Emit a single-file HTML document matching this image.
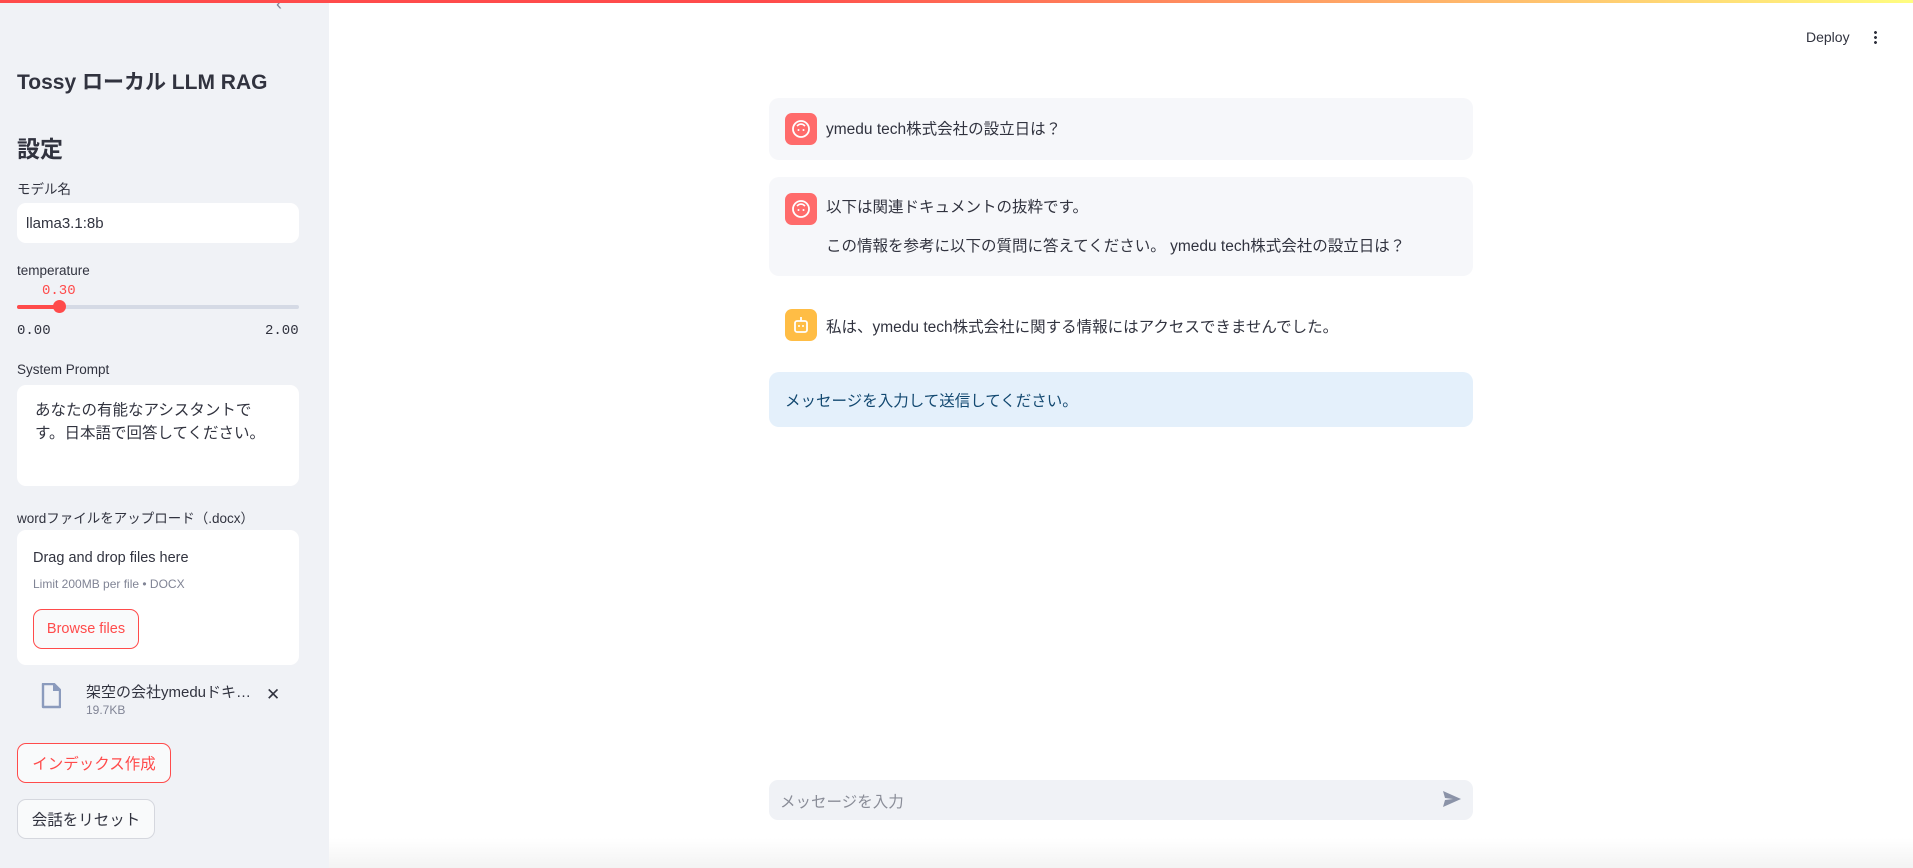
<!DOCTYPE html>
<html><head><meta charset="utf-8"><style>
*{box-sizing:border-box;margin:0;padding:0}
body{width:1913px;height:868px;overflow:hidden;background:#fff;font-family:"Liberation Sans","Noto Sans CJK JP",sans-serif;color:#31333f;position:relative}
.topbar{position:absolute;left:0;top:0;width:1913px;height:3px;background:linear-gradient(90deg,#ff4b4b,#ff4b4b 40%,#fffd80)}
.side{position:absolute;left:0;top:0;width:329px;height:868px;background:#f0f2f6}
.a{position:absolute}
.lbl{font-size:13.5px;color:#31333f}
.box{background:#fff;border-radius:9px}
.mono{font-family:"Liberation Mono",monospace;font-size:14px}
.btn{position:absolute;border-radius:9px;background:#f9fafb;font-size:16px;display:flex;align-items:center;justify-content:center}
.msg{position:absolute;left:769px;width:704px;border-radius:10px;background:#f6f7fa}
.av{position:absolute;left:16px;width:32px;height:32px;border-radius:7px;display:flex;align-items:center;justify-content:center}
.mt{position:absolute;left:57px;font-size:15.5px;white-space:nowrap}
</style></head><body>
<div class="side">
 <div class="a" style="left:276px;top:-6px;font-size:18px;color:#808495">‹</div>
 <div class="a" style="left:17px;top:66px;font-size:21px;font-weight:bold">Tossy ローカル LLM RAG</div>
 <div class="a" style="left:17px;top:130px;font-size:23px;font-weight:bold">設定</div>
 <div class="a lbl" style="left:17px;top:178px">モデル名</div>
 <div class="a box" style="left:17px;top:203px;width:282px;height:40px;padding:12px 9px;font-size:15px">llama3.1:8b</div>
 <div class="a lbl" style="left:17px;top:263px">temperature</div>
 <div class="a mono" style="left:42px;top:283px;color:#ff4b4b">0.30</div>
 <div class="a" style="left:17px;top:305px;width:282px;height:4px;background:#d5dae5;border-radius:2px"></div>
 <div class="a" style="left:17px;top:305px;width:43px;height:4px;background:#ff4b4b;border-radius:2px"></div>
 <div class="a" style="left:53px;top:300px;width:13px;height:13px;background:#ff4b4b;border-radius:50%"></div>
 <div class="a mono" style="left:17px;top:323px">0.00</div>
 <div class="a mono" style="left:265px;top:323px">2.00</div>
 <div class="a lbl" style="left:17px;top:362px">System Prompt</div>
 <div class="a box" style="left:17px;top:385px;width:282px;height:101px;padding:14px 20px 0 18px;font-size:15.5px;line-height:23px">あなたの有能なアシスタントで<br>す。日本語で回答してください。</div>
 <div class="a lbl" style="left:17px;top:507px">wordファイルをアップロード（.docx）</div>
 <div class="a box" style="left:17px;top:530px;width:282px;height:135px"></div>
 <div class="a" style="left:33px;top:550px;font-size:14.5px">Drag and drop files here</div>
 <div class="a" style="left:33px;top:577px;font-size:12px;color:#808495">Limit 200MB per file • DOCX</div>
 <div class="btn" style="left:33px;top:609px;width:106px;height:40px;border:1px solid #ff4b4b;color:#ff4b4b;font-size:14.5px">Browse files</div>
 <svg class="a" style="left:41px;top:683px" width="20" height="26" viewBox="0 0 20 26"><path d="M2 1h11l6 6v17H2z" fill="none" stroke="#8b9bbd" stroke-width="2.4" stroke-linejoin="round"/><path d="M12 1v7h7" fill="#8b9bbd"/></svg>
 <div class="a" style="left:86px;top:681px;font-size:15px">架空の会社ymeduドキ…</div>
 <div class="a" style="left:86px;top:703px;font-size:12px;color:#808495">19.7KB</div>
 <div class="a" style="left:266px;top:685px;font-size:17px">✕</div>
 <div class="btn" style="left:17px;top:743px;width:154px;height:40px;border:1px solid #ff4b4b;color:#ff4b4b;font-size:15.5px">インデックス作成</div>
 <div class="btn" style="left:17px;top:799px;width:138px;height:40px;border:1px solid #d5d7de;font-size:15.5px">会話をリセット</div>
</div>
<div class="topbar"></div>
<div class="a" style="left:1806px;top:29px;font-size:14px">Deploy</div>
<div class="a" style="left:1874px;top:30px;width:3px;height:14px;background:radial-gradient(circle,#31333f 1.3px,transparent 1.6px) 0 0/3px 5px"></div>

<div class="msg" style="top:98px;height:62px">
 <div class="av" style="top:15px;background:#ff6b6b"><svg width="20" height="20" viewBox="0 0 20 20"><circle cx="10" cy="10" r="8" fill="none" stroke="#fff" stroke-width="1.8"/><path d="M6 7q4-4 8 0" fill="none" stroke="#fff" stroke-width="1.6"/><circle cx="7.5" cy="11" r="1" fill="#fff"/><circle cx="12.5" cy="11" r="1" fill="#fff"/></svg></div>
 <div class="mt" style="top:19px">ymedu tech株式会社の設立日は？</div>
</div>
<div class="msg" style="top:177px;height:99px">
 <div class="av" style="top:16px;background:#ff6b6b"><svg width="20" height="20" viewBox="0 0 20 20"><circle cx="10" cy="10" r="8" fill="none" stroke="#fff" stroke-width="1.8"/><path d="M6 7q4-4 8 0" fill="none" stroke="#fff" stroke-width="1.6"/><circle cx="7.5" cy="11" r="1" fill="#fff"/><circle cx="12.5" cy="11" r="1" fill="#fff"/></svg></div>
 <div class="mt" style="top:18px">以下は関連ドキュメントの抜粋です。</div>
 <div class="mt" style="top:57px">この情報を参考に以下の質問に答えてください。 ymedu tech株式会社の設立日は？</div>
</div>
<div class="msg" style="top:299px;height:52px;background:#fff">
 <div class="av" style="top:10px;background:#ffbd45"><svg width="20" height="20" viewBox="0 0 20 20"><rect x="4" y="6" width="12" height="11" rx="2" fill="none" stroke="#fff" stroke-width="1.8"/><path d="M10 2v4" stroke="#fff" stroke-width="1.8"/><circle cx="8" cy="11" r="1" fill="#fff"/><circle cx="12" cy="11" r="1" fill="#fff"/></svg></div>
 <div class="mt" style="top:16px">私は、ymedu tech株式会社に関する情報にはアクセスできませんでした。</div>
</div>
<div class="msg" style="top:372px;height:55px;background:#e4f0fb">
 <div class="mt" style="left:16px;top:17px;color:#124870">メッセージを入力して送信してください。</div>
</div>
<div class="a" style="left:769px;top:780px;width:704px;height:40px;border-radius:9px;background:#f0f2f6"></div>
<div class="a" style="left:780px;top:790px;font-size:15.5px;color:#8a8d98">メッセージを入力</div>
<svg class="a" style="left:1443px;top:791px" width="18" height="16" viewBox="0 0 18 16"><path d="M0 0l18 8-18 8 2-7 8-1-8-1z" fill="#8b93a8"/></svg>
<div class="a" style="left:329px;top:838px;width:1584px;height:30px;background:linear-gradient(#fff,#f3f3f3)"></div>
</body></html>
